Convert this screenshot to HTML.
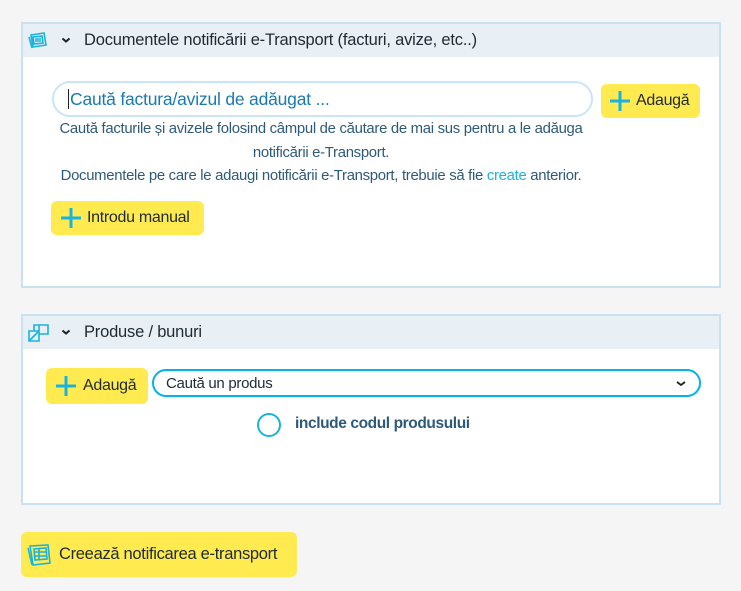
<!DOCTYPE html>
<html><head><meta charset="utf-8"><style>
*{box-sizing:border-box;margin:0;padding:0}
body{width:741px;height:591px;background:#f5f5f5;font-family:"Liberation Sans",sans-serif;position:relative;overflow:hidden;color:#1f2a33}
.panel{position:absolute;left:21px;width:700px;background:#fff;border:2px solid #c8e2f2}
.hd{height:33px;background:#e8eff5;position:relative;font-size:16.5px;letter-spacing:-0.2px}
.hd .t{position:absolute;left:61px;top:7px}
.hd .chev{position:absolute;left:37px;top:10px}
.btn{position:absolute;background:#ffeb4f;border-radius:6px;font-size:16px;letter-spacing:-0.3px;color:#1f2a33}
.btn svg{position:absolute}
.abs{position:absolute}
.help{position:absolute;left:-12px;width:620px;text-align:center;font-size:14.9px;letter-spacing:-0.3px;color:#2e5a7a;line-height:23.5px}
</style></head><body>

<div class="panel" style="top:22px;height:266px">
  <div class="hd">
    <svg class="abs" style="left:5px;top:7px" width="22" height="18" viewBox="0 0 22 18"><path d="M3 4l13-2 2 12-13 2z M1 6l3 11 M5 6l9-1 1 7-9 1z M7 8h6 M7 10h6" fill="none" stroke="#19b3e0" stroke-width="1.6"/></svg>
    <svg class="chev" width="12" height="12" viewBox="0 0 12 12"><path d="M2.5 4.5l3.5 3 3.5-3" fill="none" stroke="#222" stroke-width="2"/></svg>
    <span class="t">Documentele notificării e-Transport (facturi, avize, etc..)</span>
  </div>
  <div class="abs" style="left:29px;top:57px;width:541px;height:36px;border:2px solid #c8e6f5;border-radius:18px;font-size:17.5px;color:#1a7ab0;padding:6px 0 0 14px;letter-spacing:-0.2px"><span style="border-left:1px solid #222;padding-left:1px">Caută factura/avizul de adăugat ...</span></div>
  <div class="btn" style="left:578px;top:60px;width:99px;height:34px"><svg style="left:9px;top:7px" width="20" height="20"><path d="M10 0v20M0 10h20" stroke="#19b3e0" stroke-width="3"/></svg><span class="abs" style="left:35px;top:8px">Adaugă</span></div>
  <div class="help" style="top:94px">Caută facturile și avizele folosind câmpul de căutare de mai sus pentru a le adăuga<br>notificării e-Transport.<br>Documentele pe care le adaugi notificării e-Transport, trebuie să fie <span style="color:#19b3e0">create</span> anterior.</div>
  <div class="btn" style="left:28px;top:177px;width:153px;height:34px"><svg style="left:10px;top:7px" width="20" height="20"><path d="M10 0v20M0 10h20" stroke="#19b3e0" stroke-width="3"/></svg><span class="abs" style="left:36px;top:8px">Introdu manual</span></div>
</div>

<div class="panel" style="top:314px;height:191px">
  <div class="hd">
    <svg class="abs" style="left:5px;top:7px" width="22" height="20" viewBox="0 0 22 20"><path d="M1 8h10v10H1z M1 18L11 8 M11 2h9v9h-9z M6 8V2h5" fill="none" stroke="#19b3e0" stroke-width="1.6"/></svg>
    <svg class="chev" width="12" height="12" viewBox="0 0 12 12"><path d="M2.5 4.5l3.5 3 3.5-3" fill="none" stroke="#222" stroke-width="2"/></svg>
    <span class="t">Produse / bunuri</span>
  </div>
  <div class="btn" style="left:23px;top:52px;width:102px;height:36px"><svg style="left:10px;top:8px" width="20" height="20"><path d="M10 0v20M0 10h20" stroke="#19b3e0" stroke-width="3"/></svg><span class="abs" style="left:37px;top:9px">Adaugă</span></div>
  <div class="abs" style="left:129px;top:53px;width:549px;height:28px;border:2px solid #00b4e6;border-radius:14px;font-size:15px;letter-spacing:-0.3px;padding:4px 0 0 12px">Caută un produs
    <svg class="abs" style="right:12px;top:8px" width="12" height="10"><path d="M2 3l4 3 4-3" fill="none" stroke="#222" stroke-width="1.8"/></svg></div>
  <div class="abs" style="left:234px;top:97px;width:24px;height:24px;border:2.5px solid #19b3e0;border-radius:50%"></div>
  <div class="abs" style="left:272px;top:99px;font-size:15.5px;font-weight:bold;color:#2e5a7a;letter-spacing:-0.4px">include codul produsului</div>
</div>

<div class="btn" style="left:21px;top:532px;width:276px;height:45px"><svg style="left:6px;top:11px" width="26" height="24" viewBox="0 0 26 24"><path d="M3 3l18-1 2 18-17 2z M1 5l4 17 M7 6l12-1 1 11-12 1z M8 9h11 M8 13h11 M12 6v10" fill="none" stroke="#19b3e0" stroke-width="1.6"/></svg><span class="abs" style="left:38px;top:13px;font-size:16.5px">Creează notificarea e-transport</span></div>

</body></html>
